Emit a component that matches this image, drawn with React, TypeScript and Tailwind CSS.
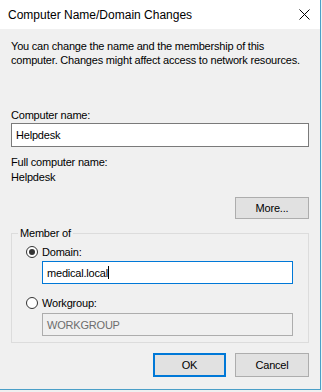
import React from "react";

function Radio({ checked }: { checked?: boolean }) {
  return (
    <span className="w-[12px] h-[12px] rounded-full border border-[#333333] bg-white grid place-items-center">
      {checked && <span className="w-[6px] h-[6px] rounded-full bg-[#333333]" />}
    </span>
  );
}

export default function App() {
  return (
    <div className="w-[322px] h-[392px] bg-[#f0f0f0] font-['Liberation_Sans',Arial,sans-serif] text-[11px] leading-[14px] tracking-[-0.2px] text-black">
      <div className="w-[321px] h-[390px] flex flex-col border-r border-b border-[#4a9fc8]">
        {/* Title bar */}
        <div className="h-[29px] bg-white flex items-center justify-between pl-[8px] pr-[10px] shrink-0 tracking-normal">
          <span className="text-[12px]">Computer Name/Domain Changes</span>
          <svg width="11" height="11" viewBox="0 0 11 11">
            <path d="M0.5 0.5 L10.5 10.5 M10.5 0.5 L0.5 10.5" stroke="#000" strokeWidth="1" />
          </svg>
        </div>

        {/* Body */}
        <div className="flex-1 flex flex-col px-[11px] pt-[10px]">
          <p className="whitespace-nowrap">
            You can change the name and the membership of this
            <br />
            computer. Changes might affect access to network resources.
          </p>

          <label className="mt-[41px]">Computer name:</label>
          <div className="mt-[1px] h-[24px] border border-[#7a7a7a] bg-white flex items-center px-[4px]">
            Helpdesk
          </div>

          <div className="mt-[8px]">Full computer name:</div>
          <div className="mt-[1px]">Helpdesk</div>

          <div className="flex justify-end mt-[13px]">
            <button className="w-[74px] h-[22px] bg-[#e1e1e1] border border-[#adadad]">More...</button>
          </div>

          <fieldset className="mt-[7px] h-[117px] border border-[#dcdcdc] pl-[14px] pr-[15px]">
            <legend className="ml-[-8px] px-[2px]">Member of</legend>
            <div className="mt-[5px] flex items-center gap-[4px]">
              <Radio checked />
              <span>Domain:</span>
            </div>
            <div className="mt-[2px] ml-[16px] h-[23px] border border-[#0078d7] bg-white flex items-center px-[4px]">
              <span>medical.local</span>
              <span className="w-px h-[13px] bg-black" />
            </div>
            <div className="mt-[12px] flex items-center gap-[4px]">
              <Radio />
              <span>Workgroup:</span>
            </div>
            <div className="mt-[3px] ml-[16px] h-[23px] border border-[#adadad] bg-[#f0f0f0] flex items-center px-[4px] text-[#6d6d6d]">
              WORKGROUP
            </div>
          </fieldset>

          <div className="flex justify-end gap-[9px] mt-[10px]">
            <button className="w-[73px] h-[24px] bg-[#e1e1e1] border-2 border-[#0078d7]">OK</button>
            <button className="w-[74px] h-[24px] bg-[#e1e1e1] border border-[#adadad]">Cancel</button>
          </div>
        </div>
      </div>
    </div>
  );
}
